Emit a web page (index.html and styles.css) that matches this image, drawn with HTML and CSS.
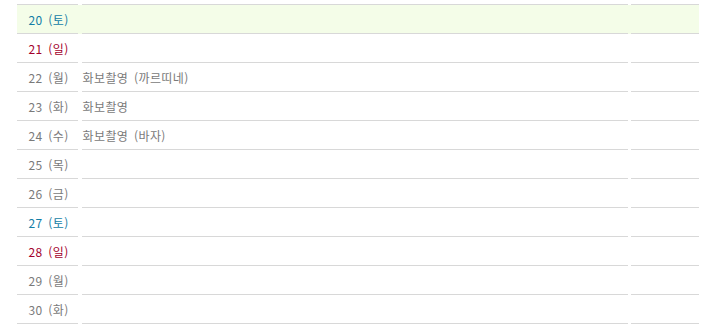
FILE: index.html
```html
<!DOCTYPE html>
<html lang="ko">
<head>
<meta charset="utf-8">
<link rel="stylesheet" href="styles.css">
</head>
<body>
<div class="sched">
  <div class="row head"><div class="c d"></div><div class="c t"></div><div class="c x"></div></div>
  <div class="row sat hl"><div class="c d">20 (토)</div><div class="c t"></div><div class="c x"></div></div>
  <div class="row sun"><div class="c d">21 (일)</div><div class="c t"></div><div class="c x"></div></div>
  <div class="row"><div class="c d">22 (월)</div><div class="c t">화보촬영 (까르띠네)</div><div class="c x"></div></div>
  <div class="row"><div class="c d">23 (화)</div><div class="c t">화보촬영</div><div class="c x"></div></div>
  <div class="row"><div class="c d">24 (수)</div><div class="c t">화보촬영 (바자)</div><div class="c x"></div></div>
  <div class="row"><div class="c d">25 (목)</div><div class="c t"></div><div class="c x"></div></div>
  <div class="row"><div class="c d">26 (금)</div><div class="c t"></div><div class="c x"></div></div>
  <div class="row sat"><div class="c d">27 (토)</div><div class="c t"></div><div class="c x"></div></div>
  <div class="row sun"><div class="c d">28 (일)</div><div class="c t"></div><div class="c x"></div></div>
  <div class="row"><div class="c d">29 (월)</div><div class="c t"></div><div class="c x"></div></div>
  <div class="row"><div class="c d">30 (화)</div><div class="c t"></div><div class="c x"></div></div>
</div>
</body>
</html>
```
FILE: styles.css
```css
html, body {
  margin: 0;
  padding: 0;
  background: #fff;
}
body {
  padding: 4px 0 0 17px;
  font-family: "Noto Sans CJK KR", "Noto Sans", sans-serif;
  font-size: 12px;
  color: #7a7a7a;
  letter-spacing: 0.4px;
  word-spacing: 2px;
}
.sched {
  width: 682px;
}
.row {
  display: grid;
  grid-template-columns: 61px 546px 68px;
  column-gap: 3.5px;
  height: 29px;
}
.row.head {
  height: 1px;
}
.c {
  border-bottom: 1px solid #d8d8d8;
  display: flex;
  align-items: center;
  white-space: nowrap;
}
.c.d {
  justify-content: center;
  padding-left: 2px;
}
.c.t {
  padding-left: 1px;
}
.row.hl {
  background: #f4fde8;
}
.row.sat .d {
  color: #137ea6;
}
.row.sun .d {
  color: #a3002c;
}
```
